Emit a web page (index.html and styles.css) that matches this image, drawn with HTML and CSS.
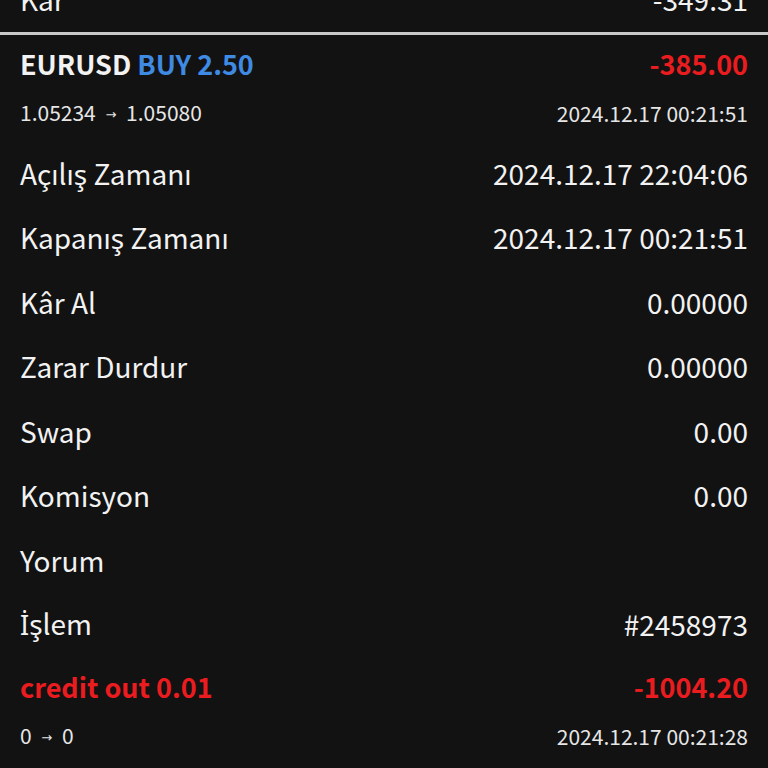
FILE: index.html
```html
<!DOCTYPE html>
<html lang="en">
<head>
<meta charset="utf-8">
<title>Islem detaylari</title>
<link rel="stylesheet" href="styles.css">
</head>
<body>
<div class="page">
  <div class="row top"><span>Kar</span><span>-349.31</span></div>
  <div class="divider"></div>
  <div class="row head">
    <span class="title">EURUSD <span class="buy">BUY 2.50</span></span>
    <span class="title neg">-385.00</span>
  </div>
  <div class="row sub first-sub">
    <span>1.05234 <span class="arrow">→</span> 1.05080</span>
    <span>2024.12.17 00:21:51</span>
  </div>
  <div class="row detail"><span>Açılış Zamanı</span><span>2024.12.17 22:04:06</span></div>
  <div class="row detail"><span>Kapanış Zamanı</span><span>2024.12.17 00:21:51</span></div>
  <div class="row detail"><span>Kâr Al</span><span>0.00000</span></div>
  <div class="row detail"><span>Zarar Durdur</span><span>0.00000</span></div>
  <div class="row detail"><span>Swap</span><span>0.00</span></div>
  <div class="row detail"><span>Komisyon</span><span>0.00</span></div>
  <div class="row detail"><span>Yorum</span><span></span></div>
  <div class="row detail"><span><span class="latin">&#304;</span>&#351;lem</span><span>#2458973</span></div>
  <div class="row head">
    <span class="title neg">credit out 0.01</span>
    <span class="title neg">-1004.20</span>
  </div>
  <div class="row sub">
    <span>0 <span class="arrow">→</span> 0</span>
    <span>2024.12.17 00:21:28</span>
  </div>
</div>
</body>
</html>
```
FILE: styles.css
```css
html, body {
  margin: 0;
  padding: 0;
  background: #121212;
  overflow: hidden;
}
.page {
  width: 768px;
  height: 768px;
  overflow: hidden;
  font-family: "Noto Sans CJK SC", "Noto Sans", sans-serif;
  color: #f2f2f2;
  display: flex;
  flex-direction: column;
}
.row {
  display: flex;
  justify-content: space-between;
  align-items: center;
  padding: 0 20px;
  flex: none;
  box-sizing: border-box;
}
.top {
  height: 32px;
  align-items: flex-end;
  padding-bottom: 19px;
  font-size: 28px;
  line-height: 28px;
}
.divider {
  height: 3px;
  background: #c9c9c9;
  flex: none;
}
.head {
  height: 62px;
  padding-bottom: 5px;
  font-size: 27px;
  line-height: 27px;
}
.title {
  font-weight: 700;
}
.buy {
  color: #3f8ae2;
}
.neg {
  color: #ea1c1f;
}
.sub {
  height: 32px;
  font-size: 21px;
  line-height: 21px;
  color: #e6e6e6;
}
.arrow {
  font-family: "DejaVu Sans", sans-serif;
  font-size: 13px;
  display: inline-block;
  vertical-align: 2px;
  margin: 0 5px;
}
.first-sub {
  margin-bottom: 13.8px;
}
.detail {
  height: 64.43px;
  padding-bottom: 4px;
  font-size: 28px;
  line-height: 28px;
}
.latin {
  font-family: "Noto Sans", sans-serif;
  font-size: 27px;
}
```
